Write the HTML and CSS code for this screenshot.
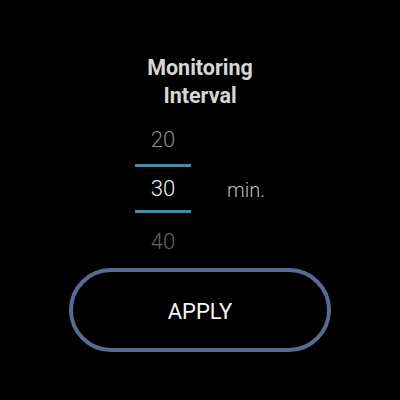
FILE: index.html
```html
<!DOCTYPE html>
<html>
<head>
<meta charset="utf-8">
<link rel="stylesheet" href="styles.css">
</head>
<body>
<main class="screen">
  <h1 class="title">Monitoring<br>Interval</h1>
  <div class="picker-row">
    <div class="picker">
      <div class="opt opt-prev">20</div>
      <div class="rule"></div>
      <div class="opt opt-current">30</div>
      <div class="rule"></div>
      <div class="opt opt-next">40</div>
    </div>
    <div class="unit">min.</div>
  </div>
  <button class="apply">APPLY</button>
</main>
</body>
</html>
```

FILE: styles.css
```css
html, body {
  margin: 0;
  padding: 0;
  background: #000;
}
.screen {
  width: 400px;
  height: 400px;
  display: flex;
  flex-direction: column;
  align-items: center;
  font-family: Roboto, "Liberation Sans", sans-serif;
  box-sizing: border-box;
  padding-top: 54px;
}
.title {
  margin: 0;
  font-size: 21.5px;
  line-height: 28px;
  font-weight: 700;
  color: #d6d6d6;
  text-align: center;
}
.picker-row {
  display: flex;
  align-items: center;
  gap: 36px;
  margin-top: 14px;
}
.picker {
  width: 56px;
  display: flex;
  flex-direction: column;
  align-items: stretch;
}
.opt {
  text-align: center;
  font-size: 22px;
  font-weight: 300;
}
.opt-prev {
  height: 40px;
  line-height: 32px;
  color: #8a8a8a;
}
.opt-current {
  height: 43px;
  line-height: 43px;
  color: #f4f4f4;
}
.opt-next {
  height: 40px;
  line-height: 58px;
  color: #626262;
}
.rule {
  height: 3px;
  background: #3b8db4;
}
.unit {
  font-size: 20px;
  font-weight: 300;
  color: #bdbdbd;
  padding-top: 3px;
}
.apply {
  margin-top: 15px;
  width: 262px;
  height: 84px;
  box-sizing: border-box;
  border: 4px solid #566a93;
  border-radius: 42px;
  background: #000;
  color: #f4f4f4;
  font-family: Roboto, "Liberation Sans", sans-serif;
  font-size: 22px;
  font-weight: 400;
  padding: 3px 0 0;
}
```
